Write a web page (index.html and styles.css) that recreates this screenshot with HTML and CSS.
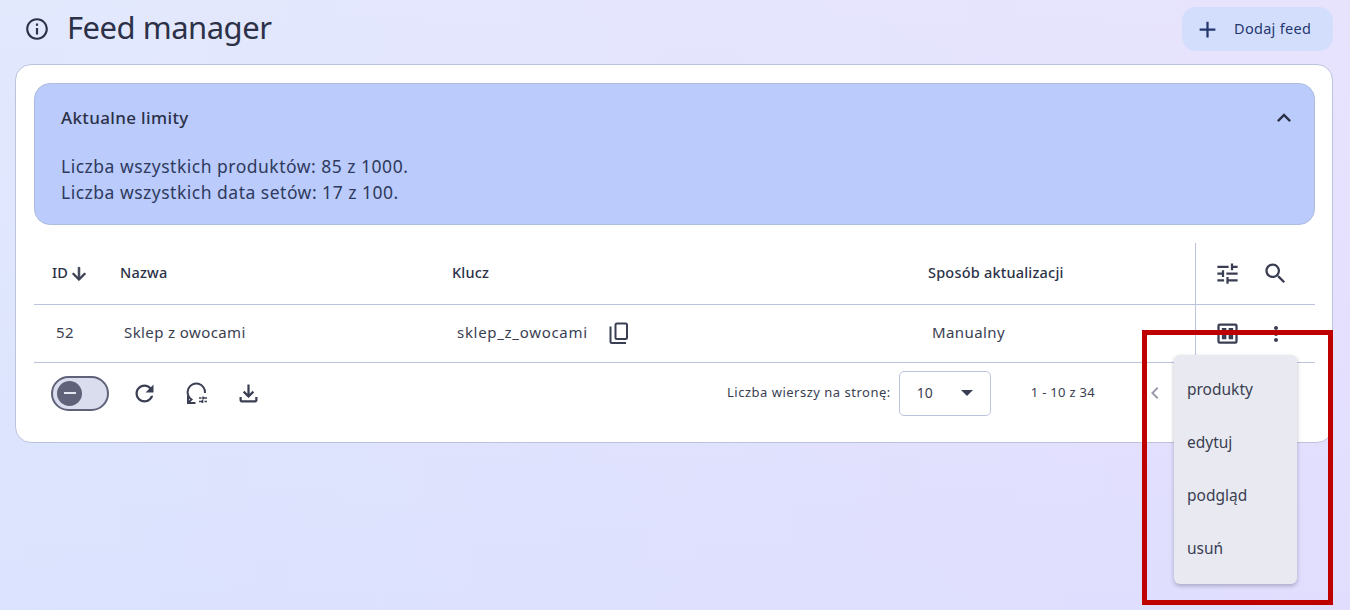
FILE: index.html
```html
<!DOCTYPE html>
<html lang="pl">
<head>
<meta charset="utf-8">
<title>Feed manager</title>
<link rel="stylesheet" href="styles.css">
</head>
<body>
<div class="page">
  <header class="top">
    <div class="top-left">
      <svg class="ico-info" viewBox="0 0 24 24" width="26" height="26"><path d="M11 7h2v2h-2zm0 4h2v6h-2zm1-9C6.48 2 2 6.48 2 12s4.48 10 10 10 10-4.48 10-10S17.52 2 12 2zm0 18c-4.41 0-8-3.59-8-8s3.59-8 8-8 8 3.59 8 8-3.59 8-8 8z"/></svg>
      <h1 class="title">Feed manager</h1>
    </div>
    <button class="add-btn">
      <svg viewBox="0 0 24 24" width="27" height="27"><path d="M19 13h-6v6h-2v-6H5v-2h6V5h2v6h6v2z"/></svg>
      <span>Dodaj feed</span>
    </button>
  </header>

  <main class="card">
    <section class="limits">
      <div class="limits-head">
        <h2 class="limits-title">Aktualne limity</h2>
        <svg viewBox="0 0 24 24" width="28" height="28"><path d="M7.41 15.41 12 10.83l4.59 4.58L18 14l-6-6-6 6z"/></svg>
      </div>
      <p class="limits-text">Liczba wszystkich produktów: 85 z 1000.<br>Liczba wszystkich data setów: 17 z 100.</p>
    </section>

    <div class="table">
      <div class="row head">
        <div class="cell id">ID <svg class="sort" viewBox="0 0 24 24" width="20" height="20"><path d="m20 12-1.41-1.41L13 16.17V4h-2v12.17l-5.58-5.59L4 12l8 8 8-8z"/></svg></div>
        <div class="cell">Nazwa</div>
        <div class="cell">Klucz</div>
        <div class="cell">Sposób aktualizacji</div>
        <div class="cell actions">
          <svg viewBox="0 0 24 24" width="27" height="27"><path d="M3 17v2h6v-2H3zM3 5v2h10V5H3zm10 16v-2h8v-2h-8v-2h-2v6h2zM7 9v2H3v2h4v2h2V9H7zm14 4v-2H11v2h10zm-6-4h2V7h4V5h-4V3h-2v6z"/></svg>
          <svg viewBox="0 0 24 24" width="27" height="27"><path d="M15.5 14h-.79l-.28-.27C15.41 12.59 16 11.11 16 9.5 16 5.91 13.09 3 9.5 3S3 5.91 3 9.5 5.91 16 9.5 16c1.61 0 3.09-.59 4.23-1.57l.27.28v.79l5 4.99L20.49 19l-4.99-5zm-6 0C7.01 14 5 11.99 5 9.5S7.01 5 9.5 5 14 7.01 14 9.5 11.99 14 9.5 14z"/></svg>
        </div>
      </div>
      <div class="row body">
        <div class="cell shift">52</div>
        <div class="cell shift">Sklep z owocami</div>
        <div class="cell shift key"><span class="key-text">sklep_z_owocami</span>
          <svg class="line" viewBox="0 0 27 27" width="27" height="27"><rect x="10.500" y="3.500" width="11.500" height="15.500" rx="1.500"/><path d="M5.500 6.500V21.500a1.500 1.500 0 0 0 1.500 1.500H21"/></svg>
        </div>
        <div class="cell shift">Manualny</div>
        <div class="cell actions">
          <svg viewBox="0 0 24 24" width="27" height="27"><path d="M5 3h14a2 2 0 0 1 2 2v14a2 2 0 0 1-2 2H5a2 2 0 0 1-2-2V5a2 2 0 0 1 2-2zm0 2v14h14V5H5zm2 2h4v4H7zm6 0h4v4h-4zm-6 6h4v4H7zm6 0h4v4h-4z"/></svg>
          <svg class="dots" viewBox="0 0 24 24" width="24" height="24"><path d="M12 8c1.100 0 2-.9 2-2s-.9-2-2-2-2 .9-2 2 .9 2 2 2zm0 2c-1.100 0-2 .9-2 2s.9 2 2 2 2-.9 2-2-.9-2-2-2zm0 6c-1.100 0-2 .9-2 2s.9 2 2 2 2-.9 2-2-.9-2-2-2z"/></svg>
        </div>
      </div>
    </div>

    <footer class="foot">
      <div class="tools">
        <div class="toggle"><span class="knob"><i></i></span></div>
        <svg viewBox="0 0 24 24" width="27" height="27"><path d="M17.65 6.35C16.2 4.9 14.21 4 12 4c-4.42 0-7.99 3.58-7.99 8s3.57 8 7.99 8c3.73 0 6.84-2.55 7.73-6h-2.08c-.82 2.33-3.04 4-5.65 4-3.31 0-6-2.69-6-6s2.69-6 6-6c1.66 0 3.14.69 4.22 1.78L13 11h7V4l-2.35 2.35z"/></svg>
        <svg class="line" viewBox="0 0 27 27" width="27" height="27"><path d="M5.500 22.500L8.500 19.500A8.700 8.700 0 1 1 22 13"/><path d="M5 15.500V23H12.500"/><path class="fine" d="M16 18h2.500M20.500 18h3.500M16 21.500h3.500M21.500 21.500h2.500M20 16.500v3M19.500 20v3"/></svg>
        <svg viewBox="0 0 24 24" width="27" height="27"><path d="M18 15v3H6v-3H4v3c0 1.100.9 2 2 2h12c1.100 0 2-.9 2-2v-3h-2zm-1-4-1.410-1.410L13 12.170V4h-2v8.170L8.410 9.590 7 11l5 5 5-5z"/></svg>
      </div>
      <div class="pager">
        <span class="pager-label">Liczba wierszy na stronę:</span>
        <div class="select"><span>10</span><i class="caret"></i></div>
        <span class="range">1 - 10 z 34</span>
        <svg class="prev" viewBox="0 0 24 24" width="24" height="24"><path d="M15.41 7.41 14 6l-6 6 6 6 1.410-1.410L10.830 12z"/></svg>
      </div>
    </footer>

    <ul class="menu">
      <li>produkty</li>
      <li>edytuj</li>
      <li>podgląd</li>
      <li>usuń</li>
    </ul>
  </main>
  <div class="highlight"></div>
</div>
</body>
</html>
```

FILE: styles.css
```css
* { box-sizing: border-box; }
html, body { margin: 0; height: 100%; }
body {
  font-family: "Noto Sans", "Liberation Sans", sans-serif;
  color: #2c3148;
  overflow: hidden;
}
.page {
  position: relative;
  width: 1350px;
  height: 610px;
  padding: 7px 17px 0 15px;
  background:
    linear-gradient(to right, rgba(220, 230, 255, 0.6), rgba(230, 220, 255, 0.6)),
    linear-gradient(to bottom, #ebedfb, #d9dffd);
}
svg { fill: #3a3e52; display: block; flex: none; }
svg.line { fill: none; stroke: #3a3e52; stroke-width: 2; }
svg.line .fine { stroke-width: 1.6; }

.top {
  display: flex;
  justify-content: space-between;
  align-items: center;
  height: 44px;
  margin-bottom: 13px;
}
.top-left { display: flex; align-items: center; gap: 17px; padding-left: 9px; }
.ico-info { fill: #2c3148; }
.title {
  margin: 0;
  padding-bottom: 4px;
  font-size: 31px;
  font-weight: 400;
  line-height: 44px;
  letter-spacing: -0.5px;
}
.add-btn {
  display: flex;
  align-items: center;
  gap: 13px;
  width: 151px;
  height: 44px;
  padding: 0 0 0 12px;
  border: 0;
  border-radius: 14px;
  background: #d3defd;
  color: #25376f;
  font: 400 14.500px "Noto Sans", sans-serif;
  letter-spacing: 0.3px;
}
.add-btn span { padding-bottom: 3px; }
.add-btn svg { fill: #25376f; }

.card {
  position: relative;
  height: 379px;
  padding: 18px 17px 0 18px;
  background: #fff;
  border: 1px solid #bcc3dc;
  border-radius: 16px;
}
.limits {
  height: 142px;
  padding: 0 16px 0 26px;
  background: #bacbfc;
  border: 1px solid #aebcde;
  border-radius: 16px;
}
.limits-head {
  display: flex;
  justify-content: space-between;
  align-items: center;
  height: 68px;
}
.limits-head svg { fill: #2c3148; }
.limits-title { margin: 0; padding-bottom: 2px; font-size: 17px; font-weight: 500; letter-spacing: 0.35px; }
.limits-text {
  margin: 0;
  padding-top: 1px;
  font-size: 17.500px;
  line-height: 26px;
  letter-spacing: 0.5px;
  color: #2f3a5c;
}

.table { margin-top: 18px; }
.row {
  display: grid;
  grid-template-columns: 86px 332px 476px 267px 120px;
  align-items: stretch;
  border-bottom: 1px solid #bcc3dc;
}
.row.head { height: 62px; font-size: 14.500px; font-weight: 500; letter-spacing: 0.2px; }
.row.body { height: 58px; font-size: 15px; letter-spacing: 0.4px; color: #3a3e52; }
.cell { display: flex; align-items: center; padding-bottom: 4px; }
.cell.id { padding-left: 18px; gap: 1px; }
.sort { margin-top: 4px; stroke: #3a3e52; stroke-width: 0.9; }
.cell.shift { padding-left: 4px; }
.cell.shift:first-child { padding-left: 22px; }
.key { gap: 17px; }
.cell.shift.key { padding-left: 5px; }
.key-text { letter-spacing: 0.7px; }
.key svg { margin-top: 4px; }
.actions {
  justify-content: flex-start;
  gap: 21px;
  padding-left: 18px;
  padding-bottom: 0;
  border-left: 1px solid #bcc3dc;
}
.dots { margin-left: 1.500px; }

.foot {
  display: flex;
  justify-content: space-between;
  align-items: center;
  height: 60px;
  padding: 0 0 0 17px;
}
.tools { display: flex; align-items: center; gap: 25px; }
.toggle {
  display: flex;
  align-items: center;
  width: 58px;
  height: 35px;
  padding-left: 4px;
  margin-right: -3px;
  background: #d9ddee;
  border: 2px solid #5f6278;
  border-radius: 18px;
}
.knob {
  display: flex;
  align-items: center;
  justify-content: center;
  width: 25px;
  height: 25px;
  border-radius: 50%;
  background: #5f6278;
}
.knob i { width: 12px; height: 2px; background: #e4e6f2; }
.pager { display: flex; align-items: center; width: 588px; font-size: 13px; color: #3a3e52; }
.pager-label { margin-right: 8px; letter-spacing: 0.5px; padding-bottom: 2px; }
.select {
  display: flex;
  align-items: center;
  justify-content: space-between;
  width: 92px;
  height: 45px;
  padding: 0 17px;
  border: 1px solid #bcc3dc;
  border-radius: 5px;
  font-size: 14px;
}
.select span { padding-bottom: 2px; }
.caret { border: 6px solid transparent; border-top-color: #3a3e52; border-bottom: 0; }
.range { margin-left: 40px; letter-spacing: 0.3px; padding-bottom: 2px; }
.prev { fill: #9a9cab; margin-left: 48px; }

.menu {
  position: absolute;
  top: 290px;
  left: 1158px;
  width: 123px;
  height: 229px;
  margin: 0;
  padding: 8px 0;
  list-style: none;
  background: #e9eaf1;
  border-radius: 6px;
  box-shadow: 0 2px 4px rgba(60, 64, 90, 0.35);
  z-index: 2;
}
.menu li {
  display: flex;
  align-items: center;
  height: 53px;
  padding: 0 0 2px 13px;
  font-size: 15.500px;
  color: #3a3e52;
}
.highlight {
  position: absolute;
  left: 1142px;
  top: 330px;
  width: 191px;
  height: 275px;
  border: 5px solid #bf0000;
  z-index: 3;
}
```
